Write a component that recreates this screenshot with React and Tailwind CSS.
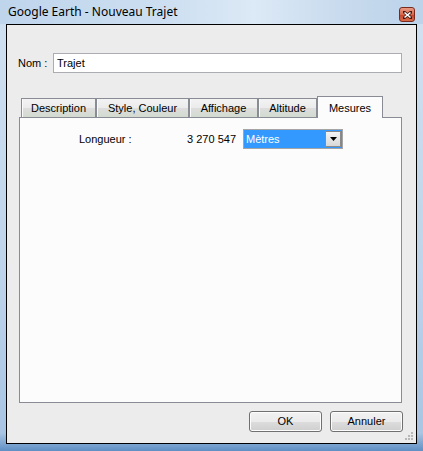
import React from "react";

const tabs = [
  { label: "Description", w: "w-[75px]" },
  { label: "Style, Couleur", w: "w-[93px]" },
  { label: "Affichage", w: "w-[69px]" },
  { label: "Altitude", w: "w-[59px]" },
];

const Button = ({ children }) => (
  <button className="w-[73px] h-[21px] rounded-[3px] border border-[#707070] bg-[linear-gradient(#f2f2f2_0%,#ebebeb_50%,#dddddd_51%,#cfcfcf_100%)] shadow-[inset_0_0_0_1px_#fcfcfc] text-[11px] text-black leading-none">
    {children}
  </button>
);

const App = () => {
  return (
    <div
      className="w-[423px] h-[451px] flex flex-col bg-[linear-gradient(180deg,#c2d7ec_0%,#cfe0f1_6%,#bed4ea_60%,#a9c5e3_96%,#5f8fc4_100%)]"
      style={{ fontFamily: '"Liberation Sans", Arial, sans-serif' }}
    >
      {/* Title bar */}
      <div className="h-[24px] flex items-start justify-between pl-[8px] pr-[8px] bg-[linear-gradient(90deg,#bfd5ec_0%,#cddff1_40%,#dce9f6_60%,#c9dbee_80%,#bcd3ea_100%)]">
        <span
          className="mt-[4px] text-[12px] text-black leading-[16px]"
          style={{ fontFamily: '"Noto Sans", sans-serif' }}
        >
          Google Earth - Nouveau Trajet
        </span>
        <div className="mt-[7px] w-[16px] h-[15px] rounded-[3px] border border-[#7a2a1c] bg-[linear-gradient(#e99a85_0%,#d9684c_50%,#c4432a_51%,#d86a4a_100%)] flex items-center justify-center">
          <svg width="9" height="8" viewBox="0 0 9 8">
            <path d="M1 1 L8 7 M8 1 L1 7" stroke="#4a1a10" strokeWidth="3" strokeLinecap="square" />
            <path d="M1.5 1.5 L7.5 6.5 M7.5 1.5 L1.5 6.5" stroke="#ffffff" strokeWidth="1.6" />
          </svg>
        </div>
      </div>

      {/* Client area */}
      <div className="ml-[6px] mr-[6px] h-[420px] border border-black bg-[#ececec] flex flex-col relative">
        {/* Nom */}
        <div className="flex items-center mt-[28px] pl-[11px] pr-[14px]">
          <span className="w-[35px] text-[11px] text-black">Nom :</span>
          <div className="flex-1 h-[20px] border border-[#abadb3] bg-white flex items-center pl-[3px] text-[11px] text-black">
            Trajet
          </div>
        </div>

        {/* Tabs */}
        <div className="mt-[23px] ml-[12px] mr-[14px] flex flex-col">
          <div className="flex items-end h-[21px] pl-[2px]">
            {tabs.map((t) => (
              <div
                key={t.label}
                className={`${t.w} h-[19px] border border-b-0 border-[#898c95] bg-[linear-gradient(#f3f3f3_0%,#ebebeb_50%,#dddddd_51%,#d3dbd0_100%)] shadow-[inset_1px_0_0_#fafafa] flex items-center justify-center text-[11px] text-black`}
              >
                {t.label}
              </div>
            ))}
            <div className="w-[66px] h-[22px] -mb-[1px] border border-b-0 border-[#898c95] bg-[#fcfcfc] flex items-start justify-center pt-[3px] text-[11px] text-black relative z-10">
              Mesures
            </div>
          </div>
          <div className="h-[286px] border border-[#898c95] bg-[#fcfcfc]">
            <div className="flex items-center mt-[11px] pl-[59px]">
              <span className="w-[100px] text-[11px] text-black">Longueur :</span>
              <span className="w-[57px] text-right text-[11px] text-black">3 270 547</span>
              <div className="ml-[7px] w-[100px] h-[20px] border border-[#a5a5a5] bg-[#3399ff] flex items-center justify-between pl-[2px] pr-[1px]">
                <span className="text-[11px] text-white">Mètres</span>
                <div className="w-[16px] h-[16px] border border-[#8a8a8a] bg-[linear-gradient(#f4f4f4,#d8d8d8)] flex items-center justify-center">
                  <svg width="7" height="4" viewBox="0 0 7 4">
                    <path d="M0 0 H7 L3.5 4 Z" fill="#000" />
                  </svg>
                </div>
              </div>
            </div>
          </div>
        </div>

        {/* Buttons */}
        <div className="flex justify-end gap-[8px] mt-[8px] mr-[13px]">
          <Button>OK</Button>
          <Button>Annuler</Button>
        </div>

        {/* Resize grip */}
        <svg className="absolute right-[2px] bottom-[2px]" width="10" height="10" viewBox="0 0 10 10">
          {[
            [8, 2], [8, 5], [5, 5], [8, 8], [5, 8], [2, 8],
          ].map(([x, y]) => (
            <rect key={`${x}-${y}`} x={x - 1} y={y - 1} width="2" height="2" fill="#b8b8b8" />
          ))}
        </svg>
      </div>
    </div>
  );
};

export default App;
